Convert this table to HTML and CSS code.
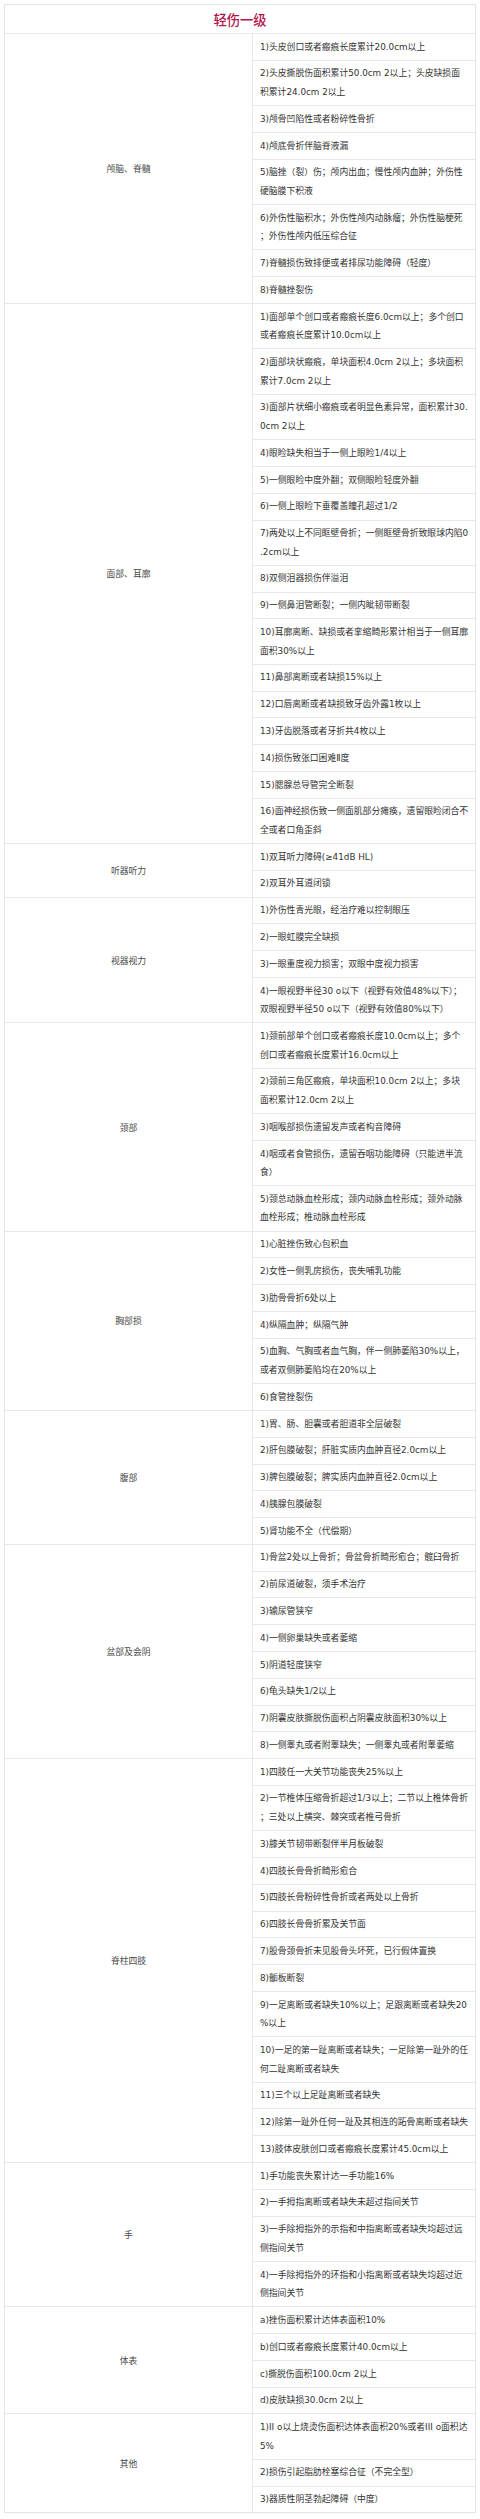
FILE: index.html
```html
<!DOCTYPE html>
<html lang="zh-CN">
<head>
<meta charset="utf-8">
<title>轻伤一级</title>
<link rel="stylesheet" href="styles.css">
</head>
<body>
<div class="sheet">
  <div class="title">轻伤一级</div>

  <div class="section">
    <div class="label">颅脑、脊髓</div>
    <div class="items">
      <div class="item">1)头皮创口或者瘢痕长度累计20.0cm以上</div>
      <div class="item">2)头皮撕脱伤面积累计50.0cm 2以上；头皮缺损面积累计24.0cm 2以上</div>
      <div class="item">3)颅骨凹陷性或者粉碎性骨折</div>
      <div class="item">4)颅底骨折伴脑脊液漏</div>
      <div class="item">5)脑挫（裂）伤；颅内出血；慢性颅内血肿；外伤性硬脑膜下积液</div>
      <div class="item">6)外伤性脑积水；外伤性颅内动脉瘤；外伤性脑梗死；外伤性颅内低压综合征</div>
      <div class="item">7)脊髓损伤致排便或者排尿功能障碍（轻度）</div>
      <div class="item">8)脊髓挫裂伤</div>
    </div>
  </div>

  <div class="section">
    <div class="label">面部、耳廓</div>
    <div class="items">
      <div class="item">1)面部单个创口或者瘢痕长度6.0cm以上；多个创口或者瘢痕长度累计10.0cm以上</div>
      <div class="item">2)面部块状瘢痕，单块面积4.0cm 2以上；多块面积累计7.0cm 2以上</div>
      <div class="item">3)面部片状细小瘢痕或者明显色素异常，面积累计30.0cm 2以上</div>
      <div class="item">4)眼睑缺失相当于一侧上眼睑1/4以上</div>
      <div class="item">5)一侧眼睑中度外翻；双侧眼睑轻度外翻</div>
      <div class="item">6)一侧上眼睑下垂覆盖瞳孔超过1/2</div>
      <div class="item">7)两处以上不同眶壁骨折；一侧眶壁骨折致眼球内陷0.2cm以上</div>
      <div class="item">8)双侧泪器损伤伴溢泪</div>
      <div class="item">9)一侧鼻泪管断裂；一侧内眦韧带断裂</div>
      <div class="item">10)耳廓离断、缺损或者挛缩畸形累计相当于一侧耳廓面积30%以上</div>
      <div class="item">11)鼻部离断或者缺损15%以上</div>
      <div class="item">12)口唇离断或者缺损致牙齿外露1枚以上</div>
      <div class="item">13)牙齿脱落或者牙折共4枚以上</div>
      <div class="item">14)损伤致张口困难Ⅱ度</div>
      <div class="item">15)腮腺总导管完全断裂</div>
      <div class="item">16)面神经损伤致一侧面肌部分瘫痪，遗留眼睑闭合不全或者口角歪斜</div>
    </div>
  </div>

  <div class="section">
    <div class="label">听器听力</div>
    <div class="items">
      <div class="item">1)双耳听力障碍(≥41dB HL)</div>
      <div class="item">2)双耳外耳道闭锁</div>
    </div>
  </div>

  <div class="section">
    <div class="label">视器视力</div>
    <div class="items">
      <div class="item">1)外伤性青光眼，经治疗难以控制眼压</div>
      <div class="item">2)一眼虹膜完全缺损</div>
      <div class="item">3)一眼重度视力损害；双眼中度视力损害</div>
      <div class="item">4)一眼视野半径30 o以下（视野有效值48%以下）；双眼视野半径50 o以下（视野有效值80%以下）</div>
    </div>
  </div>

  <div class="section">
    <div class="label">颈部</div>
    <div class="items">
      <div class="item">1)颈前部单个创口或者瘢痕长度10.0cm以上；多个创口或者瘢痕长度累计16.0cm以上</div>
      <div class="item">2)颈前三角区瘢痕，单块面积10.0cm 2以上；多块面积累计12.0cm 2以上</div>
      <div class="item">3)咽喉部损伤遗留发声或者构音障碍</div>
      <div class="item">4)咽或者食管损伤，遗留吞咽功能障碍（只能进半流食）</div>
      <div class="item">5)颈总动脉血栓形成；颈内动脉血栓形成；颈外动脉血栓形成；椎动脉血栓形成</div>
    </div>
  </div>

  <div class="section">
    <div class="label">胸部损</div>
    <div class="items">
      <div class="item">1)心脏挫伤致心包积血</div>
      <div class="item">2)女性一侧乳房损伤，丧失哺乳功能</div>
      <div class="item">3)肋骨骨折6处以上</div>
      <div class="item">4)纵隔血肿；纵隔气肿</div>
      <div class="item">5)血胸、气胸或者血气胸，伴一侧肺萎陷30%以上，或者双侧肺萎陷均在20%以上</div>
      <div class="item">6)食管挫裂伤</div>
    </div>
  </div>

  <div class="section">
    <div class="label">腹部</div>
    <div class="items">
      <div class="item">1)胃、肠、胆囊或者胆道非全层破裂</div>
      <div class="item">2)肝包膜破裂；肝脏实质内血肿直径2.0cm以上</div>
      <div class="item">3)脾包膜破裂；脾实质内血肿直径2.0cm以上</div>
      <div class="item">4)胰腺包膜破裂</div>
      <div class="item">5)肾功能不全（代偿期）</div>
    </div>
  </div>

  <div class="section">
    <div class="label">盆部及会阴</div>
    <div class="items">
      <div class="item">1)骨盆2处以上骨折；骨盆骨折畸形愈合；髋臼骨折</div>
      <div class="item">2)前尿道破裂，须手术治疗</div>
      <div class="item">3)输尿管狭窄</div>
      <div class="item">4)一侧卵巢缺失或者萎缩</div>
      <div class="item">5)阴道轻度狭窄</div>
      <div class="item">6)龟头缺失1/2以上</div>
      <div class="item">7)阴囊皮肤撕脱伤面积占阴囊皮肤面积30%以上</div>
      <div class="item">8)一侧睾丸或者附睾缺失；一侧睾丸或者附睾萎缩</div>
    </div>
  </div>

  <div class="section">
    <div class="label">脊柱四肢</div>
    <div class="items">
      <div class="item">1)四肢任一大关节功能丧失25%以上</div>
      <div class="item">2)一节椎体压缩骨折超过1/3以上；二节以上椎体骨折；三处以上横突、棘突或者椎弓骨折</div>
      <div class="item">3)膝关节韧带断裂伴半月板破裂</div>
      <div class="item">4)四肢长骨骨折畸形愈合</div>
      <div class="item">5)四肢长骨粉碎性骨折或者两处以上骨折</div>
      <div class="item">6)四肢长骨骨折累及关节面</div>
      <div class="item">7)股骨颈骨折未见股骨头坏死，已行假体置换</div>
      <div class="item">8)骺板断裂</div>
      <div class="item">9)一足离断或者缺失10%以上；足跟离断或者缺失20%以上</div>
      <div class="item">10)一足的第一趾离断或者缺失；一足除第一趾外的任何二趾离断或者缺失</div>
      <div class="item">11)三个以上足趾离断或者缺失</div>
      <div class="item">12)除第一趾外任何一趾及其相连的跖骨离断或者缺失</div>
      <div class="item">13)肢体皮肤创口或者瘢痕长度累计45.0cm以上</div>
    </div>
  </div>

  <div class="section">
    <div class="label">手</div>
    <div class="items">
      <div class="item">1)手功能丧失累计达一手功能16%</div>
      <div class="item">2)一手拇指离断或者缺失未超过指间关节</div>
      <div class="item">3)一手除拇指外的示指和中指离断或者缺失均超过远侧指间关节</div>
      <div class="item">4)一手除拇指外的环指和小指离断或者缺失均超过近侧指间关节</div>
    </div>
  </div>

  <div class="section">
    <div class="label">体表</div>
    <div class="items">
      <div class="item">a)挫伤面积累计达体表面积10%</div>
      <div class="item">b)创口或者瘢痕长度累计40.0cm以上</div>
      <div class="item">c)撕脱伤面积100.0cm 2以上</div>
      <div class="item">d)皮肤缺损30.0cm 2以上</div>
    </div>
  </div>

  <div class="section">
    <div class="label">其他</div>
    <div class="items">
      <div class="item">1)II o以上烧烫伤面积达体表面积20%或者III o面积达5%</div>
      <div class="item">2)损伤引起脂肪栓塞综合征（不完全型）</div>
      <div class="item">3)器质性阴茎勃起障碍（中度）</div>
    </div>
  </div>
</div>
</body>
</html>
```

FILE: styles.css
```css
html, body {
  margin: 0;
  padding: 0;
  background: #ffffff;
}

body {
  font-family: "DejaVu Sans", "Noto Sans CJK SC", sans-serif;
  font-size: 8.8px;
  color: #333333;
}

.sheet {
  margin: 4px 4px 0 4px;
  width: 472px;
  box-sizing: border-box;
  border: 1px solid #e3e3e3;
}

.title {
  height: 28px;
  display: flex;
  align-items: center;
  justify-content: center;
  border-bottom: 1px solid #e8e8e8;
  font-family: "Noto Sans CJK SC", sans-serif;
  font-size: 13.3px;
  font-weight: 500;
  color: #b0174c;
}

.section {
  display: flex;
}

.section + .section {
  border-top: 1px solid #e8e8e8;
}

.label {
  width: 247px;
  flex: none;
  display: flex;
  align-items: center;
  justify-content: center;
  color: #4a4a4a;
  border-right: 1px solid #e8e8e8;
}

.items {
  flex: 1;
  min-width: 0;
}

.item {
  padding: 3.6px 6.5px 3.6px 7px;
  line-height: 18.6px;
  word-break: break-all;
  line-break: anywhere;
}

.item + .item {
  border-top: 1px solid #e8e8e8;
}
```
